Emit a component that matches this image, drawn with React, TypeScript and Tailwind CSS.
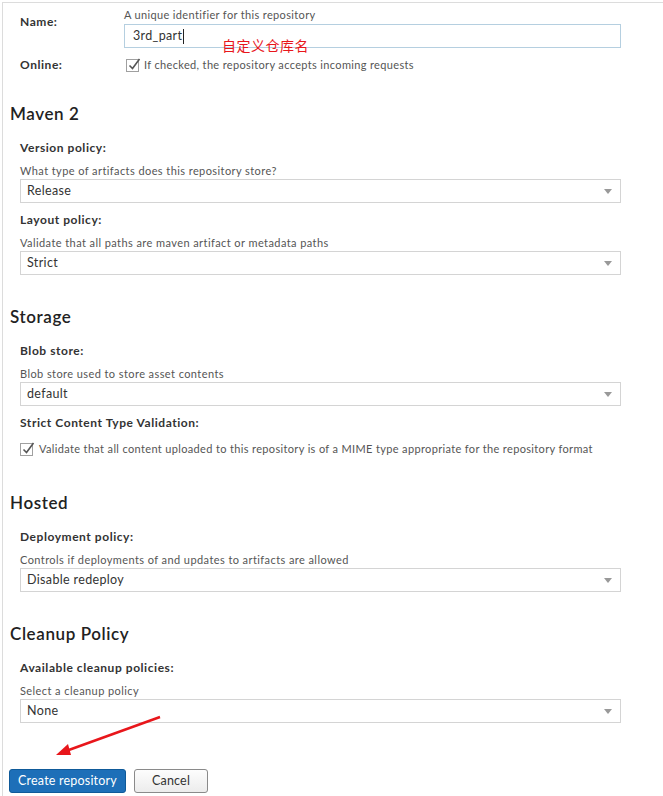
import React from "react";

const font = { fontFamily: "Lato, 'Noto Sans', sans-serif" };

function Check() {
  return (
    <span className="relative inline-block w-[13px] h-[13px] border border-[#a0a0a0] bg-white shrink-0">
      <svg className="absolute left-[0px] top-[-3px]" width="15" height="15" viewBox="0 0 15 15">
        <path d="M2.5 8.5 L5.5 11.5 L12.5 2" fill="none" stroke="#555" strokeWidth="1.6" />
      </svg>
    </span>
  );
}

function Select({ value }: { value: string }) {
  return (
    <div className="mt-[1px] h-[24px] w-[601px] border border-[#d4d4d4] bg-white flex items-center justify-between pl-[6px] pr-[8px]">
      <span className="text-[12.5px] tracking-[0.35px] text-[#333]">{value}</span>
      <svg width="8" height="5" viewBox="0 0 8 5">
        <path d="M0 0 L8 0 L4 5 Z" fill="#999" />
      </svg>
    </div>
  );
}

function Label({ children, className = "" }: { children: React.ReactNode; className?: string }) {
  return (
    <div className={`h-[16px] leading-[16px] text-[12px] tracking-[0.55px] font-bold text-[#333] ${className}`}>{children}</div>
  );
}

function Field({ label, help, value, first }: { label: string; help: string; value: string; first?: boolean }) {
  return (
    <div className={first ? "mt-[15px]" : "mt-[9px]"}>
      <Label>{label}</Label>
      <div className="mt-[8px] h-[14px] leading-[14px] text-[11px] tracking-[0.42px] text-[#555]">{help}</div>
      <Select value={value} />
    </div>
  );
}

function Heading({ children, mt }: { children: React.ReactNode; mt: string }) {
  return (
    <div className={`${mt} -ml-[10px] h-[22px] leading-[22px] text-[17px] tracking-[0.6px] font-semibold text-[#222]`}>{children}</div>
  );
}

export default function App() {
  return (
    <div className="w-[663px] h-[796px] bg-white pl-[2px] pt-[2px] overflow-hidden relative" style={font}>
      <div className="h-full border-l border-t border-[#dcdcdc] pl-[17px] pr-[40px]">
        {/* Name row */}
        <div className="flex pt-[5px]">
          <Label className="w-[104px] mt-[6px] shrink-0">Name:</Label>
          <div>
            <div className="h-[14px] leading-[14px] text-[11px] tracking-[0.35px] text-[#555]">A unique identifier for this repository</div>
            <div className="mt-[2px] h-[24px] w-[497px] border border-[#b5cfe0] bg-white flex items-center pl-[8px]">
              <span className="text-[12.5px] tracking-[0.35px] text-[#333]">3rd_part</span>
              <span className="inline-block w-px h-[15px] bg-[#222] ml-[1px]" />
            </div>
          </div>
        </div>
        {/* Online row */}
        <div className="flex items-center mt-[9px] h-[16px]">
          <Label className="w-[106px] shrink-0">Online:</Label>
          <Check />
          <span className="ml-[5px] text-[11px] tracking-[0.35px] text-[#555]">If checked, the repository accepts incoming requests</span>
        </div>

        <Heading mt="mt-[30px]">Maven 2</Heading>
        <Field first label="Version policy:" help="What type of artifacts does this repository store?" value="Release" />
        <Field label="Layout policy:" help="Validate that all paths are maven artifact or metadata paths" value="Strict" />

        <Heading mt="mt-[31px]">Storage</Heading>
        <Field first label="Blob store:" help="Blob store used to store asset contents" value="default" />
        <Label className="mt-[9px]">Strict Content Type Validation:</Label>
        <div className="mt-[10px] h-[16px] flex items-center">
          <Check />
          <span className="ml-[6px] text-[11px] tracking-[0.35px] text-[#555]">
            Validate that all content uploaded to this repository is of a MIME type appropriate for the repository format
          </span>
        </div>

        <Heading mt="mt-[35px]">Hosted</Heading>
        <Field first label="Deployment policy:" help="Controls if deployments of and updates to artifacts are allowed" value="Disable redeploy" />

        <Heading mt="mt-[31px]">Cleanup Policy</Heading>
        <Field first label="Available cleanup policies:" help="Select a cleanup policy" value="None" />

        <div className="mt-[46px] -ml-[11px] flex gap-[8px] items-center">
          <button className="h-[24px] w-[117px] rounded-[3px] border border-[#0f5a99] bg-[#1d6fb8] text-white text-[12.5px] tracking-[0.2px]">
            Create repository
          </button>
          <button className="h-[24px] w-[74px] rounded-[3px] border border-[#8a8a8a] bg-gradient-to-b from-[#fdfdfd] to-[#ececec] text-[#333] text-[12.5px] tracking-[0.2px]">
            Cancel
          </button>
        </div>
      </div>

      {/* annotation */}
      <div
        className="absolute left-[222px] top-[37px] text-[14px] leading-[16px] tracking-[0.5px] text-[#e8161b]"
        style={{ fontFamily: "'Noto Sans CJK SC', sans-serif" }}
      >
        自定义仓库名
      </div>
      <svg className="absolute left-0 top-0 pointer-events-none" width="663" height="796">
        <line x1="160" y1="717" x2="66" y2="751" stroke="#e8161b" strokeWidth="2.5" />
        <path d="M56 755 L68 744 L71 755 Z" fill="#e8161b" />
      </svg>
    </div>
  );
}
